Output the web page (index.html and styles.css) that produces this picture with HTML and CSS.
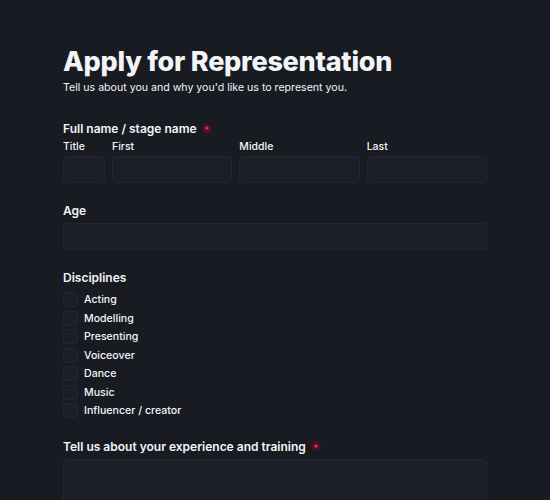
FILE: index.html
```html
<!DOCTYPE html>
<html lang="en">
<head>
    <meta charset="UTF-8">
    <meta name="viewport" content="width=device-width, initial-scale=1.0">
    <title>Apply for Representation</title>
    <link rel="stylesheet" href="styles.css">
</head>
<body>

    <!-- Application form -->
    <form class="apply-form">
        <header class="form-header">
            <h1>Apply for Representation</h1>
            <p>Tell us about you and why you'd like us to represent you.</p>
        </header>

        <!-- Name -->
        <div class="field">
            <div class="field-label">Full name / stage name <span class="required">*</span></div>
            <div class="name-grid">
                <label class="sub-field">
                    <span>Title</span>
                    <input type="text" name="title">
                </label>
                <label class="sub-field">
                    <span>First</span>
                    <input type="text" name="first">
                </label>
                <label class="sub-field">
                    <span>Middle</span>
                    <input type="text" name="middle">
                </label>
                <label class="sub-field">
                    <span>Last</span>
                    <input type="text" name="last">
                </label>
            </div>
        </div>

        <!-- Age -->
        <div class="field">
            <label class="field-label" for="age">Age</label>
            <input type="text" id="age" name="age">
        </div>

        <!-- Disciplines -->
        <div class="field">
            <div class="field-label">Disciplines</div>
            <div class="checks">
                <label class="check"><input type="checkbox" name="discipline" value="acting"><span class="box"></span>Acting</label>
                <label class="check"><input type="checkbox" name="discipline" value="modelling"><span class="box"></span>Modelling</label>
                <label class="check"><input type="checkbox" name="discipline" value="presenting"><span class="box"></span>Presenting</label>
                <label class="check"><input type="checkbox" name="discipline" value="voiceover"><span class="box"></span>Voiceover</label>
                <label class="check"><input type="checkbox" name="discipline" value="dance"><span class="box"></span>Dance</label>
                <label class="check"><input type="checkbox" name="discipline" value="music"><span class="box"></span>Music</label>
                <label class="check"><input type="checkbox" name="discipline" value="influencer"><span class="box"></span>Influencer / creator</label>
            </div>
        </div>

        <!-- Experience -->
        <div class="field">
            <label class="field-label" for="experience">Tell us about your experience and training <span class="required">*</span></label>
            <textarea id="experience" name="experience" rows="6"></textarea>
        </div>
    </form>

</body>
</html>
```

FILE: styles.css
```css
body {
    margin: 0;
    background-color: #181b22;
    color: #f3f4f6;
    font-family: Inter, "Noto Sans", sans-serif;
}

.apply-form {
    width: 424px;
    margin: 0 auto;
    padding-top: 43px;
}

/* Heading */
.form-header {
    margin-bottom: 26px;
}

.form-header h1 {
    margin: 0;
    font-size: 27px;
    font-weight: 800;
    letter-spacing: -0.25px;
    line-height: 38px;
}

.form-header p {
    margin: 0;
    font-size: 10.6px;
    line-height: 14px;
}

/* Fields */
.field {
    margin-top: 20px;
}

.field-label {
    display: flex;
    align-items: center;
    gap: 5px;
    font-size: 12px;
    font-weight: 600;
    line-height: 15px;
    margin-bottom: 5px;
}

.required {
    display: inline-flex;
    align-items: center;
    justify-content: center;
    width: 10px;
    height: 10px;
    border-radius: 50%;
    background-color: #421329;
    color: #f0245f;
    font-size: 10px;
    font-weight: 700;
    line-height: 1;
    padding-top: 3px;
    box-sizing: border-box;
}

input[type="text"],
textarea {
    display: block;
    width: 100%;
    box-sizing: border-box;
    height: 27px;
    background-color: #1c1f27;
    border: 1px solid #24272f;
    border-radius: 4px;
    color: #f3f4f6;
    font: inherit;
}

textarea {
    height: 80px;
    resize: none;
}

/* Name row */
.name-grid {
    display: grid;
    grid-template-columns: 42px 1fr 1fr 1fr;
    gap: 7px;
    margin-top: -1px;
}

.sub-field span {
    display: block;
    font-size: 10.5px;
    font-weight: 500;
    line-height: 14px;
    margin-bottom: 2px;
}

/* Checkboxes */
.checks {
    display: flex;
    flex-direction: column;
    gap: 3px;
    margin-top: 7px;
}

.check {
    display: flex;
    align-items: center;
    gap: 6px;
    font-size: 10.6px;
    font-weight: 500;
    line-height: 15.5px;
}

.check input {
    display: none;
}

.check .box {
    width: 15px;
    height: 15px;
    box-sizing: border-box;
    background-color: #1c1f27;
    border: 1px solid #24272f;
    border-radius: 3px;
}
```
